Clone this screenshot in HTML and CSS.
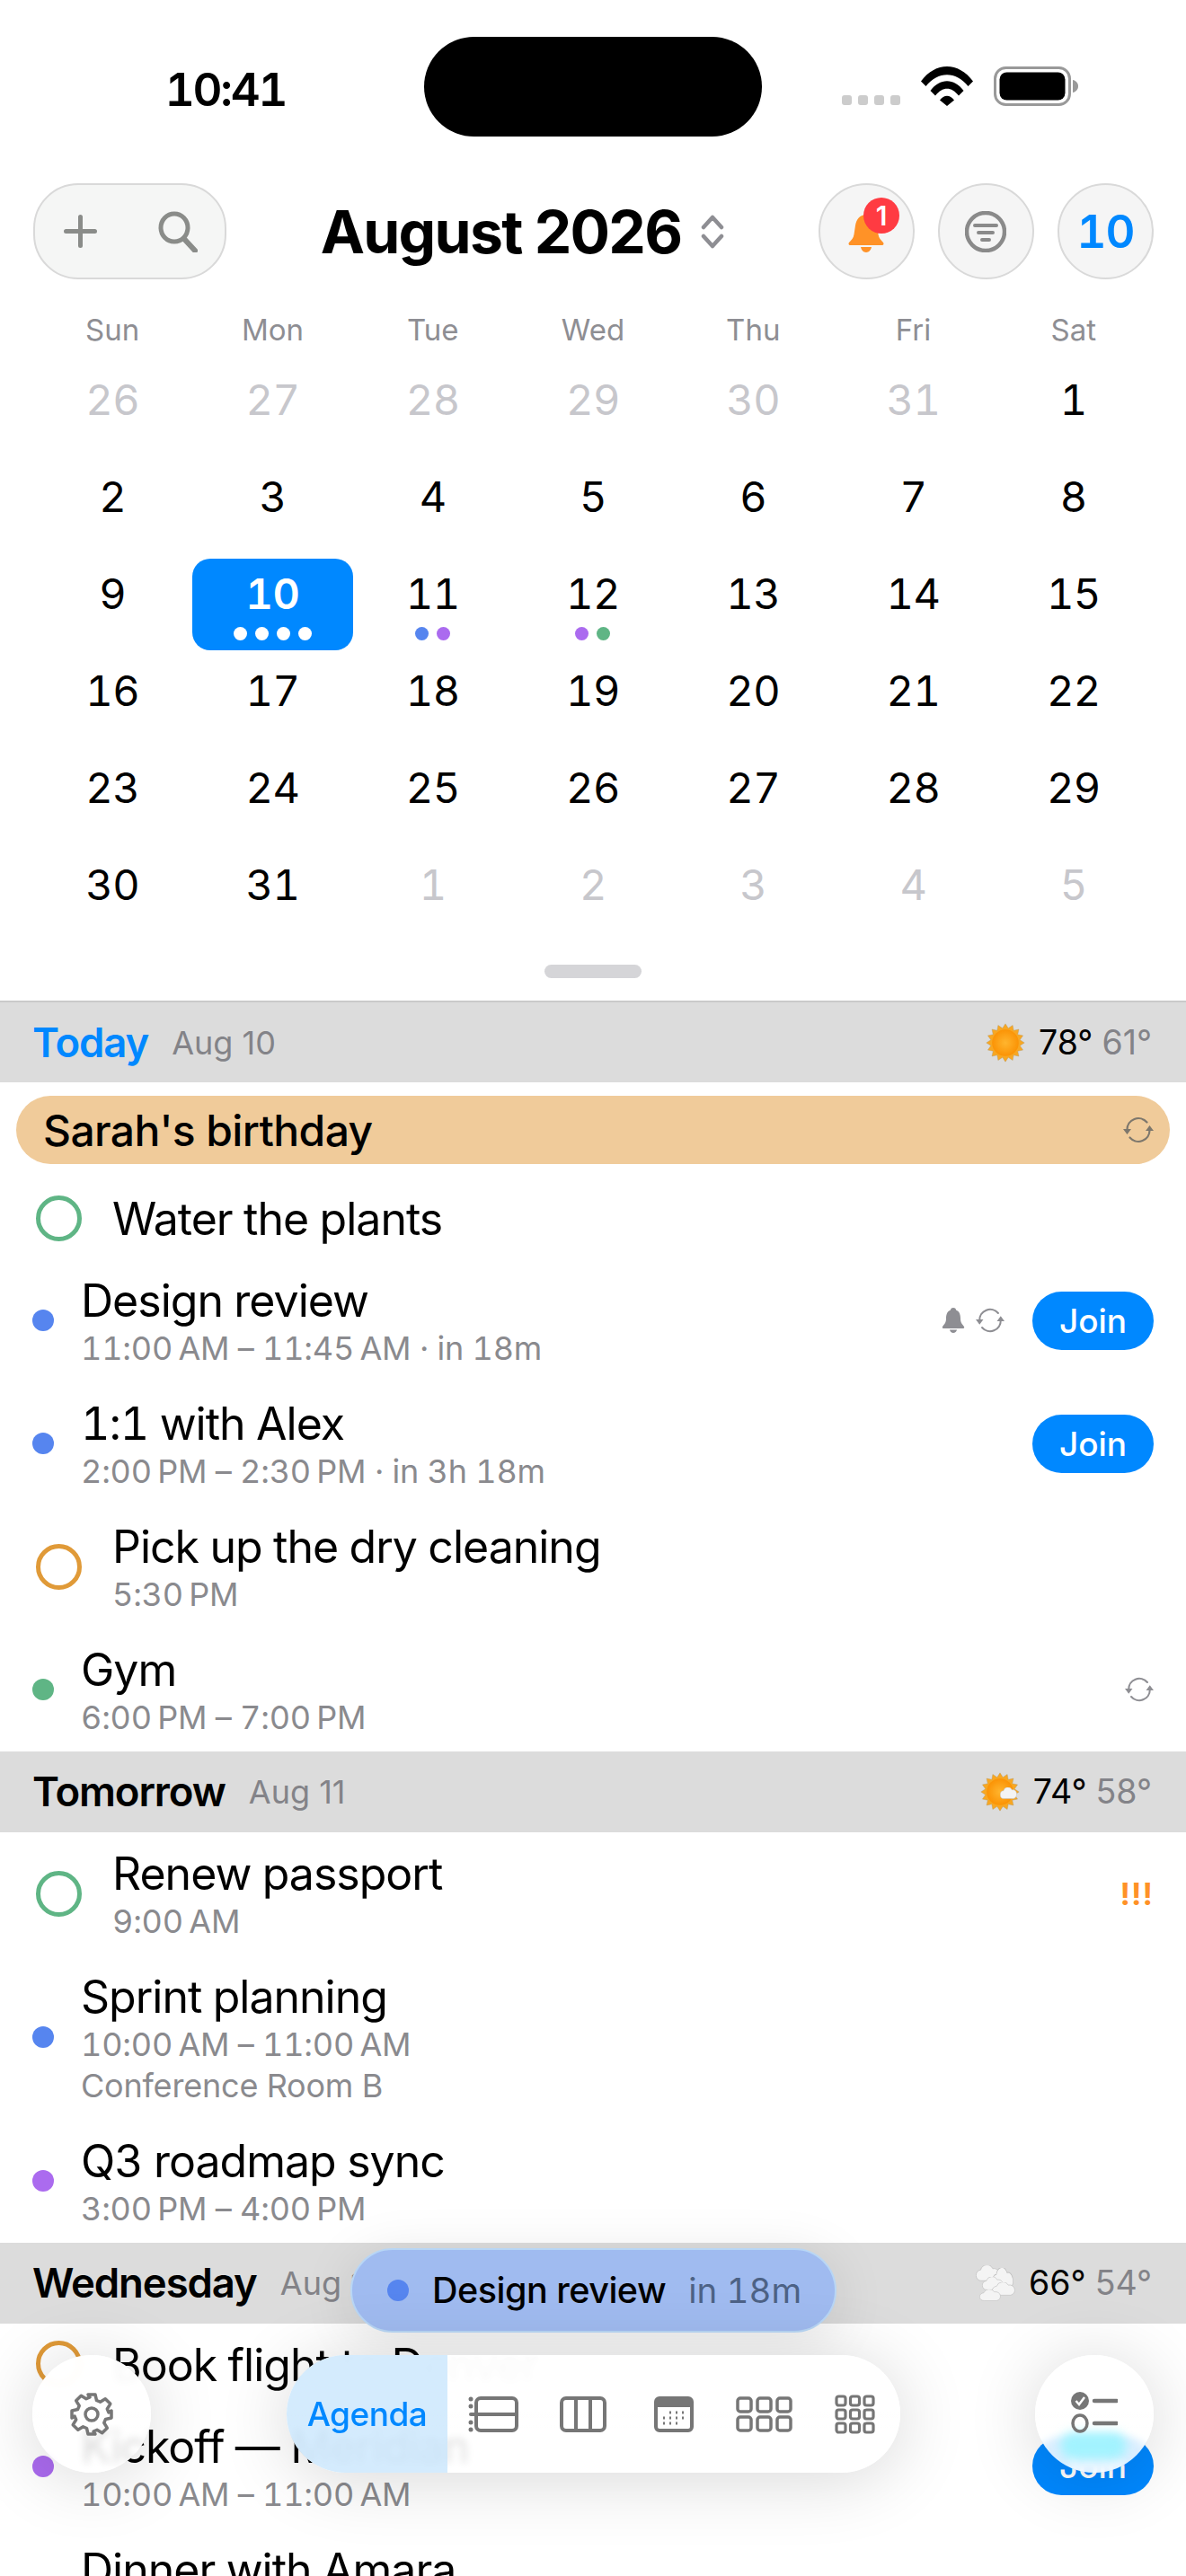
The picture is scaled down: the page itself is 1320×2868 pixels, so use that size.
FILE: index.html
```html
<!DOCTYPE html>
<html lang="en">
<head>
<meta charset="utf-8">
<title>Calendar</title>
<link rel="stylesheet" href="styles.css">
</head>
<body>
<svg class="defs" aria-hidden="true">
  <defs>
    <radialGradient id="sunfill" cx="50%" cy="50%" r="50%">
      <stop offset="0" stop-color="#ffb52e"/><stop offset="1" stop-color="#fb9305"/>
    </radialGradient>
    <symbol id="sun" viewBox="-52 -52 104 104">
      <polygon fill="#f8a722" stroke="#b59a6a" stroke-width="1" points="50,0 38.3,7.6 46.2,19.1 32.4,21.7 35.4,35.4 21.7,32.4 19.1,46.2 7.6,38.3 0,50 -7.6,38.3 -19.1,46.2 -21.7,32.4 -35.4,35.4 -32.4,21.7 -46.2,19.1 -38.3,7.6 -50,0 -38.3,-7.6 -46.2,-19.1 -32.4,-21.7 -35.4,-35.4 -21.7,-32.4 -19.1,-46.2 -7.6,-38.3 0,-50 7.6,-38.3 19.1,-46.2 21.7,-32.4 35.4,-35.4 32.4,-21.7 46.2,-19.1 38.3,-7.6"/>
      <circle r="35" fill="url(#sunfill)"/>
    </symbol>
    <symbol id="repeat" viewBox="0 0 34 30">
      <path d="M4.5 15a12.5 12.5 0 0 1 22-8.500M29.500 15a12.500 12.500 0 0 1-22 8.500" fill="none" stroke="currentColor" stroke-width="2.200" stroke-linecap="round"/>
      <path d="M0 14h9l-4.500 6zM25 16h9l-4.500-6z" fill="currentColor"/>
    </symbol>
    <symbol id="cloud" viewBox="0 0 40 24" preserveAspectRatio="none">
      <path d="M9 23a8 8 0 0 1-1-16 11 11 0 0 1 20-2 9 9 0 0 1 4 18z" fill="#f4f4f4" stroke="#bdbdbd" stroke-width="1"/>
    </symbol>
  </defs>
</svg>

<div class="phone">
  <header class="status">
    <div class="status-left"><span class="time">10:41</span></div>
    <div class="island"></div>
    <div class="status-right">
      <div class="signal"><i></i><i></i><i></i><i></i></div>
      <svg class="wifi" viewBox="0 0 58 44"><path d="M0 16.500C16-5.500 42-5.500 58 16.500L52.500 22C39 5 19 5 5.500 22z M10.500 27C21 12.500 37 12.500 47.500 27L42 32.500C34 22 24 22 16 32.500z M21 37.500C25.500 31 32.500 31 37 37.500L29 44z" fill="#000"/></svg>
      <svg class="battery" viewBox="0 0 94 44"><rect x="1.500" y="1.500" width="83" height="41" rx="12" fill="none" stroke="#999" stroke-width="3"/><rect x="6.500" y="6.500" width="73" height="31" rx="8" fill="#000"/><path d="M88 15c3 .5 6 3 6 7s-3 6.500-6 7z" fill="#999"/></svg>
    </div>
  </header>

  <section class="toolbar">
    <div class="glass-pill">
      <svg class="ic-plus" viewBox="0 0 37 37"><path d="M18.500 2.500v32M2.500 18.500h32" stroke="#8a8c89" stroke-width="5" stroke-linecap="round"/></svg>
      <svg class="ic-search" viewBox="0 0 44 46"><ellipse cx="18" cy="18.500" rx="15" ry="15.500" fill="none" stroke="#8a8c89" stroke-width="5"/><path d="M29 31l12 13" stroke="#8a8c89" stroke-width="6" stroke-linecap="round"/></svg>
    </div>
    <div class="month">
      <h1 class="month-title">August 2026</h1>
      <svg class="ic-updown" viewBox="0 0 26 38"><path d="M3 14L13 3l10 11M3 24l10 11 10-11" fill="none" stroke="#8e8e93" stroke-width="4.500" stroke-linecap="round" stroke-linejoin="round"/></svg>
    </div>
    <div class="round-group">
      <div class="glass-round">
        <svg class="ic-bell" viewBox="0 0 40 42"><path d="M20 0c-7 0-11 5-12 12l-1.500 10c-.5 4-3 6-5.500 9-1 1.500-.5 3 1.500 3h35c2 0 2.500-1.500 1.500-3-2.500-3-5-5-5.500-9L32 12C31 5 27 0 20 0zM14 36h12c-.5 3-3 6-6 6s-5.500-3-6-6z" fill="#ff9227"/></svg>
        <span class="bell-badge">1</span>
      </div>
      <div class="glass-round">
        <svg class="ic-filter" viewBox="0 0 46 46"><ellipse cx="23" cy="23" rx="21" ry="21" fill="none" stroke="#8a8a8a" stroke-width="4.500"/><path d="M11 16h24M15 24h16M19 32h8" stroke="#8a8a8a" stroke-width="4" stroke-linecap="round"/></svg>
      </div>
      <div class="glass-round today-btn">10</div>
    </div>
  </section>

  <section class="calendar">
    <div class="weekdays">
      <span>Sun</span><span>Mon</span><span>Tue</span><span>Wed</span><span>Thu</span><span>Fri</span><span>Sat</span>
    </div>
    <div class="days">
      <div class="day muted">26</div><div class="day muted">27</div><div class="day muted">28</div><div class="day muted">29</div><div class="day muted">30</div><div class="day muted">31</div><div class="day">1</div>
      <div class="day">2</div><div class="day">3</div><div class="day">4</div><div class="day">5</div><div class="day">6</div><div class="day">7</div><div class="day">8</div>
      <div class="day">9</div>
      <div class="day selected">10<div class="marks"><i class="white"></i><i class="white"></i><i class="white"></i><i class="white"></i></div></div>
      <div class="day">11<div class="marks"><i class="blue"></i><i class="purple"></i></div></div>
      <div class="day">12<div class="marks"><i class="purple"></i><i class="green"></i></div></div>
      <div class="day">13</div><div class="day">14</div><div class="day">15</div>
      <div class="day">16</div><div class="day">17</div><div class="day">18</div><div class="day">19</div><div class="day">20</div><div class="day">21</div><div class="day">22</div>
      <div class="day">23</div><div class="day">24</div><div class="day">25</div><div class="day">26</div><div class="day">27</div><div class="day">28</div><div class="day">29</div>
      <div class="day">30</div><div class="day">31</div><div class="day muted">1</div><div class="day muted">2</div><div class="day muted">3</div><div class="day muted">4</div><div class="day muted">5</div>
    </div>
    <div class="handle"></div>
  </section>

  <main class="agenda">
    <div class="day-head first">
      <span class="day-name blue-text">Today</span><span class="day-date">Aug 10</span>
      <span class="weather"><svg class="wx"><use href="#sun"/></svg><b>78°</b><em>61°</em></span>
    </div>
    <div class="allday-wrap">
      <div class="allday"><span>Sarah's birthday</span><svg class="ic-repeat dim"><use href="#repeat"/></svg></div>
    </div>
    <div class="row task single"><span class="ring green-ring"></span><div class="text"><div class="title">Water the plants</div></div></div>
    <div class="row event"><span class="dot blue"></span><div class="text"><div class="title">Design review</div><div class="sub">11:00&#8239;AM – 11:45&#8239;AM · in 18m</div></div>
      <svg class="ic-smallbell" viewBox="0 0 26 28"><path d="M13 0c-2 0-3 1-3 2.500C6 4 5 8 5 12c0 5-2 6-4 9-.5 1 0 2 1 2h22c1 0 1.500-1 1-2-2-3-4-4-4-9 0-4-1-8-5-9.500C16 1 15 0 13 0zM9 24.500h8c-.5 2-2 3.500-4 3.500s-3.500-1.500-4-3.500z" fill="#8e8e93"/></svg>
      <svg class="ic-repeat gray"><use href="#repeat"/></svg>
      <span class="join">Join</span></div>
    <div class="row event"><span class="dot blue"></span><div class="text"><div class="title">1:1 with Alex</div><div class="sub">2:00&#8239;PM – 2:30&#8239;PM · in 3h 18m</div></div><span class="join">Join</span></div>
    <div class="row task"><span class="ring orange-ring"></span><div class="text"><div class="title">Pick up the dry cleaning</div><div class="sub">5:30&#8239;PM</div></div></div>
    <div class="row event"><span class="dot green"></span><div class="text"><div class="title">Gym</div><div class="sub">6:00&#8239;PM – 7:00&#8239;PM</div></div><svg class="ic-repeat gray"><use href="#repeat"/></svg></div>

    <div class="day-head">
      <span class="day-name">Tomorrow</span><span class="day-date">Aug 11</span>
      <span class="weather"><svg class="wx" viewBox="0 0 44 44"><use href="#sun" width="44" height="44"/><use href="#cloud" x="22" y="17" width="19" height="13"/></svg><b>74°</b><em>58°</em></span>
    </div>
    <div class="row task"><span class="ring green-ring"></span><div class="text"><div class="title">Renew passport</div><div class="sub">9:00&#8239;AM</div></div><span class="urgent">!!!</span></div>
    <div class="row event"><span class="dot blue"></span><div class="text"><div class="title">Sprint planning</div><div class="sub">10:00&#8239;AM – 11:00&#8239;AM</div><div class="sub">Conference Room B</div></div></div>
    <div class="row event"><span class="dot purple"></span><div class="text"><div class="title">Q3 roadmap sync</div><div class="sub">3:00&#8239;PM – 4:00&#8239;PM</div></div></div>

    <div class="day-head">
      <span class="day-name">Wednesday</span><span class="day-date">Aug 12</span>
      <span class="weather"><svg class="wx" viewBox="0 0 44 40"><use href="#cloud" x="0" y="0" width="27" height="18"/><use href="#cloud" x="18" y="3" width="24" height="25"/><use href="#cloud" x="7" y="13" width="24" height="15"/><use href="#cloud" x="18" y="19" width="26" height="15"/><use href="#cloud" x="4" y="27" width="24" height="13"/></svg><b>66°</b><em>54°</em></span>
    </div>
    <div class="row task single"><span class="ring orange-ring"></span><div class="text"><div class="title">Book flight to Denver</div></div></div>
    <div class="row event"><span class="dot purple"></span><div class="text"><div class="title">Kickoff — Meridian</div><div class="sub">10:00&#8239;AM – 11:00&#8239;AM</div></div><span class="join">Join</span></div>
    <div class="row event"><span class="dot green"></span><div class="text"><div class="title">Dinner with Amara</div><div class="sub">7:00&#8239;PM – 9:00&#8239;PM</div></div></div>
  </main>

  <div class="next-pill"><span class="dot blue"></span><span class="next-title">Design review</span><span class="next-in">in 18m</span></div>

  <button class="float-round settings" aria-label="Settings">
    <svg class="ic-gear" viewBox="0 0 48 48"><path d="M20 2h8l1.500 6.500 4 1.700 5.700-3.500 5.600 5.600-3.500 5.700 1.700 4L46 20v8l-6.500 1.500-1.700 4 3.500 5.700-5.600 5.600-5.700-3.500-4 1.700L28 46h-8l-1.500-6.500-4-1.700-5.700 3.500-5.600-5.600 3.500-5.700-1.700-4L2 28v-8l6.500-1.500 1.700-4-3.500-5.700 5.600-5.600 5.700 3.500 4-1.700z" fill="none" stroke="#777" stroke-width="3.500" stroke-linejoin="round"/><circle cx="24" cy="24" r="7" fill="none" stroke="#777" stroke-width="3.500"/></svg>
  </button>

  <nav class="views">
    <span class="view-active">Agenda</span>
    <svg class="vi vi-list" viewBox="0 0 56 40"><rect x="9" y="2" width="45" height="36" rx="5" fill="none" stroke="#767676" stroke-width="4"/><path d="M3 20h51" stroke="#767676" stroke-width="4" stroke-linecap="round"/><circle cx="3" cy="3" r="2.500" fill="#767676"/><circle cx="3" cy="11" r="2.500" fill="#767676"/><circle cx="3" cy="29" r="2.500" fill="#767676"/><circle cx="3" cy="37" r="2.500" fill="#767676"/></svg>
    <svg class="vi vi-cols" viewBox="0 0 52 40"><rect x="2" y="2" width="48" height="36" rx="5" fill="none" stroke="#767676" stroke-width="4"/><path d="M18 2v36M34 2v36" stroke="#767676" stroke-width="4"/></svg>
    <svg class="vi vi-month" viewBox="0 0 44 40"><rect x="2" y="2" width="40" height="36" rx="4" fill="#fff" stroke="#767676" stroke-width="4"/><path d="M2 6a4 4 0 0 1 4-4h32a4 4 0 0 1 4 4v6H2z" fill="#767676"/><path d="M17 18h2M24 18h2M31 18h2M10 24h2M17 24h2M24 24h2M31 24h2M10 30h2M17 30h2M24 30h2" stroke="#767676" stroke-width="3"/></svg>
    <svg class="vi vi-six" viewBox="0 0 63 40"><g fill="none" stroke="#767676" stroke-width="3.500"><rect x="2" y="2" width="15" height="15" rx="3"/><rect x="24" y="2" width="15" height="15" rx="3"/><rect x="46" y="2" width="15" height="15" rx="3"/><rect x="2" y="23" width="15" height="15" rx="3"/><rect x="24" y="23" width="15" height="15" rx="3"/><rect x="46" y="23" width="15" height="15" rx="3"/></g></svg>
    <svg class="vi vi-nine" viewBox="0 0 45 44"><g fill="none" stroke="#767676" stroke-width="3.200"><rect x="2" y="2" width="10" height="10" rx="2.500"/><rect x="17.500" y="2" width="10" height="10" rx="2.500"/><rect x="33" y="2" width="10" height="10" rx="2.500"/><rect x="2" y="17" width="10" height="10" rx="2.500"/><rect x="17.500" y="17" width="10" height="10" rx="2.500"/><rect x="33" y="17" width="10" height="10" rx="2.500"/><rect x="2" y="32" width="10" height="10" rx="2.500"/><rect x="17.500" y="32" width="10" height="10" rx="2.500"/><rect x="33" y="32" width="10" height="10" rx="2.500"/></g></svg>
  </nav>

  <button class="float-round tasks" aria-label="Tasks">
    <span class="glow"></span>
    <svg class="ic-tasks" viewBox="0 0 52 46"><ellipse cx="10" cy="10" rx="10" ry="10" fill="#767676"/><path d="M5.500 10l3.500 4 6-8" fill="none" stroke="#fff" stroke-width="2.500"/><path d="M26 10h25M26 35h25" stroke="#767676" stroke-width="4.500" stroke-linecap="round"/><ellipse cx="10" cy="35" rx="8" ry="9" fill="none" stroke="#767676" stroke-width="3.500"/></svg>
  </button>
</div>
</body>
</html>
```

FILE: styles.css
```css
* { box-sizing: border-box; }
html, body { margin: 0; padding: 0; background: #fff; }
body { font-family: Inter, "Liberation Sans", sans-serif; color: #000; }
.defs { position: absolute; width: 0; height: 0; }
.phone { position: relative; width: 1320px; height: 2868px; overflow: hidden; background: #fff; }

/* status bar */
.status { height: 204px; padding-top: 41px; display: flex; align-items: flex-start; }
.status-left { width: 472px; padding: 31px 0 0 30px; text-align: center; }
.time { font-size: 51px; line-height: 56px; font-weight: 600; letter-spacing: -2.200px; font-variant-numeric: tabular-nums; }
.island { width: 376px; height: 111px; border-radius: 56px; background: #000; }
.status-right { flex: 1; display: flex; align-items: flex-end; padding: 33px 0 0 89px; }
.signal { display: flex; gap: 7px; margin-bottom: 1px; }
.signal i { width: 11px; height: 11px; border-radius: 3px; background: #ccc; }
.wifi { width: 58px; height: 44px; margin-left: 23px; }
.battery { width: 94px; height: 44px; margin-left: 23px; }

/* top controls */
.toolbar { height: 107px; padding: 0 36px 0 37px; display: flex; justify-content: space-between; align-items: center; }
.glass-pill { width: 215px; height: 107px; border-radius: 50px; background: #f5f6f5; border: 2px solid #d9d9d9; display: flex; align-items: center; padding-left: 32px; }
.ic-plus { width: 37px; height: 37px; }
.ic-search { width: 44px; height: 46px; margin-left: 68px; }
.month { display: flex; align-items: center; gap: 22px; }
.month-title { margin: 0; font-size: 66px; line-height: 76px; font-weight: 700; letter-spacing: -1.700px; white-space: nowrap; }
.ic-updown { width: 26px; height: 38px; }
.round-group { display: flex; gap: 26px; }
.glass-round { position: relative; width: 107px; height: 107px; border-radius: 50%; background: #f5f5f5; border: 2px solid #d9d9d9; display: flex; align-items: center; justify-content: center; }
.ic-bell { width: 40px; height: 42px; margin-top: 4px; }
.bell-badge { position: absolute; left: 48px; top: 14px; width: 40px; height: 40px; border-radius: 50%; background: #ff3b42; color: #fff; font-size: 30px; line-height: 40px; font-weight: 600; text-align: center; }
.ic-filter { width: 46px; height: 46px; }
.today-btn { color: #0088ff; font-size: 51px; font-weight: 600; font-variant-numeric: tabular-nums; letter-spacing: -1px; }

/* calendar */
.calendar { padding: 0 36px; }
.weekdays { display: grid; grid-template-columns: repeat(7, 1fr); height: 89px; padding-top: 34px; }
.weekdays span { text-align: center; color: #8e8e93; font-size: 33px; line-height: 44px; }
.days { display: grid; grid-template-columns: repeat(7, 1fr); grid-auto-rows: 108px; }
.day { height: 102px; margin-top: 6px; border-radius: 20px; text-align: center; font-size: 47px; line-height: 78px; font-variant-numeric: tabular-nums; letter-spacing: -.5px; }
.day.muted { color: #c7c7cc; }
.day.selected { background: #0088ff; color: #fff; font-weight: 600; }
.marks { display: flex; justify-content: center; gap: 9px; height: 15px; margin-top: -2px; }
.marks i { width: 15px; height: 15px; border-radius: 50%; }
.white { background: #fff; }
.blue { background: #5685ef; }
.purple { background: #ab6bef; }
.green { background: #5fb585; }
.handle { width: 108px; height: 15px; border-radius: 8px; background: #d5d5d8; margin: 26px auto 25px; }

/* agenda */
.day-head { height: 90px; background: #dcdcdc; padding: 0 38px 0 36px; display: flex; align-items: center; }
.day-head.first { height: 91px; border-top: 2px solid #c9c9c9; }
.day-name { font-size: 45.500px; font-weight: 600; letter-spacing: -1.100px; }
.blue-text { color: #0088ff; }
.day-date { margin-left: 26px; font-size: 36px; color: #838388; }
.weather { margin-left: auto; display: flex; align-items: center; font-size: 37.500px; }
.wx { width: 44px; height: 44px; margin-right: 15px; }
.weather b { font-weight: 400; }
.weather em { font-style: normal; color: #838388; margin-left: 10px; }
.allday-wrap { padding: 15px 18px; }
.allday { height: 76px; border-radius: 38px; background: #f0cb9a; display: flex; align-items: center; justify-content: space-between; padding: 0 18px 0 30px; font-size: 48px; font-weight: 500; letter-spacing: -.600px; }
.row { display: flex; align-items: center; padding: 15.500px 36px; }
.row.single { padding-top: 15px; padding-bottom: 15.500px; }
.text { flex: 1; min-width: 0; position: relative; top: 1px; }
.title { font-size: 50px; line-height: 60px; letter-spacing: -1px; white-space: nowrap; font-variant-numeric: tabular-nums; }
.sub { font-size: 36px; line-height: 46px; color: #8a8a8e; white-space: nowrap; font-variant-numeric: tabular-nums; letter-spacing: -.200px; }
.dot { flex: none; width: 24px; height: 24px; border-radius: 50%; margin-right: 30px; }
.ring { flex: none; width: 51px; height: 51px; border-radius: 50%; border: 5px solid; margin: 0 34px 0 4px; }
.green-ring { border-color: #5fb585; }
.orange-ring { border-color: #e09a38; }
.join { flex: none; width: 135px; height: 65px; border-radius: 33px; background: #0088ff; color: #fff; font-size: 37px; line-height: 65px; font-weight: 500; text-align: center; }
.ic-repeat { width: 32px; height: 30px; }
.ic-repeat.gray { color: #8e8e93; }
.ic-repeat.dim { width: 34px; color: #7d776c; }
.ic-smallbell { width: 26px; height: 28px; margin-right: 12px; }
.row .ic-repeat.gray + .join { margin-left: 31px; }
.urgent { color: #ff9227; font-size: 34px; font-weight: 700; letter-spacing: 1px; }

/* floating controls */
.next-pill { position: absolute; left: 390px; top: 2503px; width: 541px; height: 94px; border-radius: 47px; background: #a0bbf0; border: 2px solid #b8d6f5; display: flex; align-items: center; padding-left: 39px; box-shadow: 0 8px 60px rgba(0, 0, 0, .1); }
.next-pill .dot { margin-right: 26px; }
.next-title { font-size: 39.500px; font-weight: 500; letter-spacing: -.500px; }
.next-in { font-size: 38.500px; margin-left: 25px; color: #4d6285; font-variant-numeric: tabular-nums; }
.float-round { position: absolute; top: 2622px; width: 132px; height: 131px; padding: 0; border: 0; border-radius: 50%; background: linear-gradient(rgba(255, 255, 255, .97) 42%, rgba(255, 255, 255, .86) 62%); backdrop-filter: blur(4px); box-shadow: 0 6px 80px rgba(0, 0, 0, .16); display: flex; align-items: center; justify-content: center; overflow: hidden; }
.settings { left: 36px; }
.tasks { left: 1152px; }
.ic-gear { width: 48px; height: 48px; }
.glow { position: absolute; left: 28px; top: 86px; width: 74px; height: 30px; border-radius: 15px; background: #a2f3ff; filter: blur(6px); }
.ic-tasks { position: relative; width: 52px; height: 46px; margin: -4px 0 0 0; }
.views { position: absolute; left: 319px; top: 2622px; width: 683px; height: 131px; border-radius: 66px; background: linear-gradient(rgba(255, 255, 255, .98) 42%, rgba(255, 255, 255, .87) 62%); backdrop-filter: blur(4px); box-shadow: 0 6px 80px rgba(0, 0, 0, .16); display: flex; align-items: center; overflow: hidden; }
.view-active { align-self: stretch; width: 179px; background: rgba(198, 228, 252, .75); color: #0088ff; font-size: 37px; font-weight: 500; line-height: 131px; text-align: center; letter-spacing: -.500px; }
.vi { height: 40px; flex: none; }
.vi-list { width: 56px; margin-left: 23px; }
.vi-cols { width: 52px; margin-left: 46px; }
.vi-month { width: 44px; margin-left: 53px; }
.vi-six { width: 63px; margin-left: 47px; }
.vi-nine { width: 45px; height: 44px; margin-left: 47px; }
```
